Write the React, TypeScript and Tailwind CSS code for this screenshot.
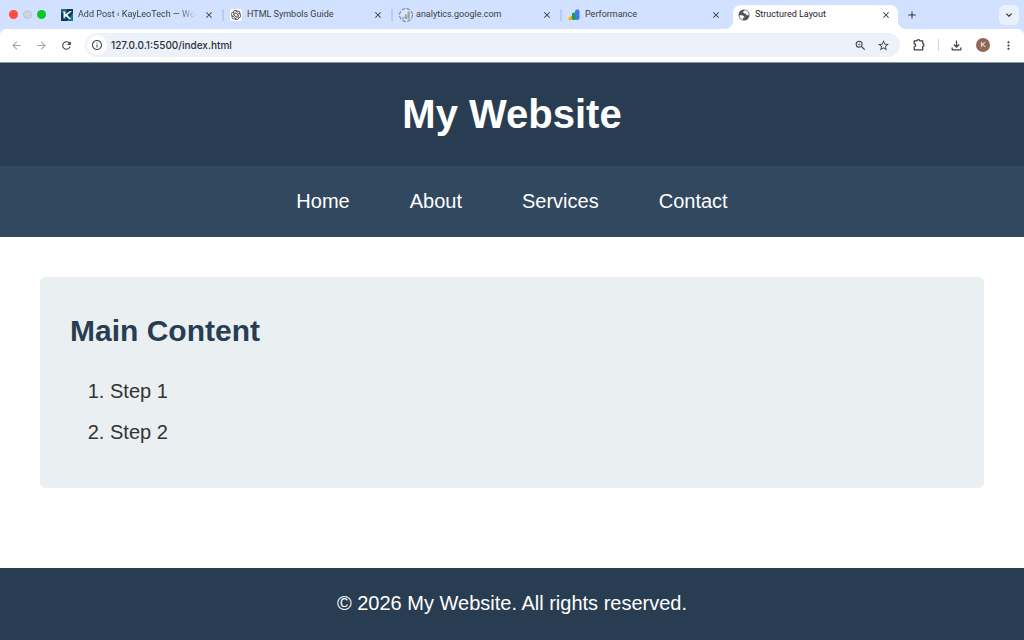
import type { ReactNode } from "react";
import {
  MdArrowBack,
  MdArrowForward,
  MdClose,
  MdAdd,
  MdKeyboardArrowDown,
  MdMoreVert,
  MdOutlineFileDownload,
  MdOutlineInfo,
  MdRefresh,
  MdStarOutline,
  MdZoomIn,
} from "react-icons/md";
import { SiOpenai } from "react-icons/si";

interface Tab {
  title: string;
  icon: ReactNode;
  active?: boolean;
  separator?: boolean;
  faded?: boolean;
}

const tabs: Tab[] = [
  { title: "Add Post ‹ KayLeoTech — Wo", icon: <KayLeoIcon />, separator: true, faded: true },
  {
    title: "HTML Symbols Guide",
    icon: (
      <span className="flex size-3 items-center justify-center rounded-xs bg-white text-[#333]">
        <SiOpenai size={10} />
      </span>
    ),
    separator: true,
  },
  { title: "analytics.google.com", icon: <LoadingAnalyticsIcon />, separator: true },
  { title: "Performance", icon: <PerformanceIcon /> },
  { title: "Structured Layout", icon: <GlobeIcon />, active: true },
];

const links = ["Home", "About", "Services", "Contact"];
const steps = ["Step 1", "Step 2"];

function KayLeoIcon() {
  return (
    <svg width="12" height="12" viewBox="0 0 12 12">
      <rect width="12" height="12" fill="#123552" />
      <path d="M0 0h7L4 4H0z" fill="#176c83" />
      <path d="M12 4v8H6z" fill="#147e9a" />
      <path d="M2 2.500h2.500V5L9 2h2L6.500 6 10 10H8L4.500 7v1L2.500 9.500V4z" fill="#e8fcff" />
      <path d="M2.500 9.500 4.500 8v2z" fill="#20bdca" />
    </svg>
  );
}

function LoadingAnalyticsIcon() {
  return (
    <svg width="14" height="14" viewBox="0 0 14 14">
      <circle cx="7" cy="7" r="6.400" fill="#dce6f8" stroke="#4d6db5" strokeWidth="1" strokeDasharray="3.500 1.500" />
      <path d="M4.300 9.800v.5M7 7.500v2.800M9.700 4.300v6" stroke="#a3a5a8" strokeWidth="2.300" strokeLinecap="round" />
    </svg>
  );
}

function PerformanceIcon() {
  return (
    <svg width="12" height="12" viewBox="0 0 12 12">
      <path d="M0.500 11.500V9l3-2.500h2.500V10z" fill="#fbbc04" />
      <path d="M1.500 9.500 4 7h2v3.500H3z" fill="#f29900" />
      <rect x="4" y="3.500" width="4" height="7.500" rx="1.500" fill="#16a34a" />
      <rect x="7" y="0.500" width="4.500" height="10.500" rx="2" fill="#3b78f5" />
    </svg>
  );
}

function GlobeIcon() {
  return (
    <svg width="12" height="12" viewBox="0 0 12 12">
      <circle cx="6" cy="6" r="5.500" fill="#4f5358" />
      <path d="M1.400 6.200h3.100l1.800 1.600v1H5v1.900A4.700 4.700 0 0 1 1.400 6.200z" fill="#fff" />
      <path d="M6.700 1.300 5.200 2.600v1.200l1.800.9h1l.6 1.500h2.100A4.700 4.700 0 0 0 6.700 1.300z" fill="#fff" />
    </svg>
  );
}

function ExtensionIcon() {
  return (
    <svg width="14" height="14" viewBox="0 0 14 14" fill="none" stroke="currentColor" strokeWidth="1.300">
      <path
        d="M2.200 2.800H5a1.400 1.200 0 0 1 2.800 0h2.900v2.800a1.300 1.400 0 0 1 0 2.800v3.400H2.200V8.800a1.500 1.500 0 0 0 0-3z"
        strokeLinejoin="round"
      />
    </svg>
  );
}

function BrowserTab({ title, icon, active, separator, faded }: Tab) {
  return (
    <div
      className={
        active
          ? "relative mx-0.5 flex h-6 w-[165px] min-w-0 shrink items-center self-end rounded-t-lg bg-white pb-1 pl-[5px] pr-[7px] text-[#1f2023]"
          : "relative flex h-6 w-[169px] min-w-0 shrink items-center self-end pb-1 pl-1.5 pr-2.5 text-[#3c4046]"
      }
    >
      {active && (
        <>
          <svg className="absolute -left-2 bottom-0" width="8" height="8" viewBox="0 0 8 8">
            <path d="M8 0v8H0a8 8 0 0 0 8-8z" fill="#fff" />
          </svg>
          <svg className="absolute -right-2 bottom-0" width="8" height="8" viewBox="0 0 8 8">
            <path d="M0 0v8h8a8 8 0 0 1-8-8z" fill="#fff" />
          </svg>
        </>
      )}
      <button className="flex h-5 min-w-0 flex-1 items-center gap-[3px] text-left">
        <span className="flex w-3.5 shrink-0 items-center">{icon}</span>
        <span
          className={
            faded
              ? "flex-1 overflow-hidden mask-r-from-85% whitespace-nowrap"
              : "flex-1 overflow-hidden whitespace-nowrap"
          }
        >
          {title}
        </span>
      </button>
      <button aria-label={`Close ${title}`} className="ml-2 shrink-0 text-[#333]">
        <MdClose size={10} />
      </button>
      {separator && <span className="absolute right-0 h-3 w-0.5 bg-[#b0cdfb]" />}
    </div>
  );
}

function TabStrip() {
  return (
    <div className="flex h-[29px] items-center bg-[#d1e1ff] pr-[5px] text-[9px]">
      <div className="flex shrink-0 gap-[5px] px-[9px]">
        <span className="size-[9px] rounded-full bg-[#ff4b42]" />
        <span className="size-[9px] rounded-full border border-[#bdc6d5] bg-[#cdd4df]" />
        <span className="size-[9px] rounded-full bg-[#05c92b]" />
      </div>
      {tabs.map((tab) => (
        <BrowserTab key={tab.title} {...tab} />
      ))}
      <button aria-label="New tab" className="ml-1.5 shrink-0 text-[#30343a]">
        <MdAdd size={12} />
      </button>
      <button
        aria-label="Search tabs"
        className="ml-auto flex size-5 shrink-0 items-center justify-center rounded-md bg-[#e9f1ff] text-[#222]"
      >
        <MdKeyboardArrowDown size={12} />
      </button>
    </div>
  );
}

function Toolbar() {
  return (
    <div className="bg-[#d1e1ff]">
      <div className="flex h-[34px] items-center rounded-t-md border-b border-[#8e99a5] bg-white pb-px pl-2.5 pr-[9px] text-[#3f4348]">
        <div className="flex shrink-0 gap-3">
          <button aria-label="Back" className="text-[#a4a6a9]">
            <MdArrowBack size={13} />
          </button>
          <button aria-label="Forward" className="text-[#a4a6a9]">
            <MdArrowForward size={13} />
          </button>
          <button aria-label="Reload">
            <MdRefresh size={13} />
          </button>
        </div>
        <div className="ml-3 flex h-6 min-w-0 flex-1 items-center rounded-full bg-[#ecf1fa] pl-0.5 pr-2.5">
          <button
            aria-label="Site information"
            className="flex size-5 shrink-0 items-center justify-center rounded-full bg-white"
          >
            <MdOutlineInfo size={12} />
          </button>
          <input
            aria-label="Address"
            defaultValue="127.0.0.1:5500/index.html"
            className="ml-1 min-w-0 flex-1 bg-transparent font-[Inter,sans-serif] text-[10px] font-medium text-[#2b2e33] outline-none"
          />
          <button aria-label="Zoom" className="shrink-0">
            <MdZoomIn size={13} />
          </button>
          <button aria-label="Bookmark this tab" className="ml-2.5 shrink-0">
            <MdStarOutline size={13} />
          </button>
        </div>
        <button aria-label="Extensions" className="ml-3 shrink-0">
          <ExtensionIcon />
        </button>
        <span className="ml-3 h-3 w-px shrink-0 bg-[#c4d9fc]" />
        <button aria-label="Downloads" className="ml-2.5 shrink-0">
          <MdOutlineFileDownload size={15} />
        </button>
        <button
          aria-label="Profile"
          className="ml-3 flex size-3.5 shrink-0 items-center justify-center rounded-full bg-[#936658] text-[8px] leading-none text-white"
        >
          K
        </button>
        <button aria-label="Menu" className="ml-3 shrink-0">
          <MdMoreVert size={13} />
        </button>
      </div>
    </div>
  );
}

export default function App() {
  return (
    <div className="flex min-h-screen flex-col bg-white font-['Liberation_Sans',Arial,sans-serif] text-xl leading-[23px] text-[#333]">
      <div className="font-[Roboto,sans-serif] leading-normal">
        <TabStrip />
        <Toolbar />
      </div>
      <header className="bg-[#293d52] py-7 text-center text-white">
        <h1 className="text-[40px] leading-[47px] font-bold">My Website</h1>
      </header>
      <nav className="flex justify-center gap-[60px] bg-[#31485f] py-6 text-white">
        {links.map((link) => (
          <a key={link} href="#">
            {link}
          </a>
        ))}
      </nav>
      <main className="px-10 pt-10 pb-20">
        <section className="rounded-md bg-[#eaeff2] p-[30px]">
          <h2 className="mb-[21px] text-[30px] leading-12 font-bold text-[#293d52]">
            Main Content
          </h2>
          <ol className="list-decimal pl-10">
            {steps.map((step) => (
              <li key={step} className="mb-2.5 leading-[31px]">
                {step}
              </li>
            ))}
          </ol>
        </section>
      </main>
      <footer className="flex-1 bg-[#293d52] pt-6 text-center text-white">
        <p>© 2026 My Website. All rights reserved.</p>
      </footer>
    </div>
  );
}
